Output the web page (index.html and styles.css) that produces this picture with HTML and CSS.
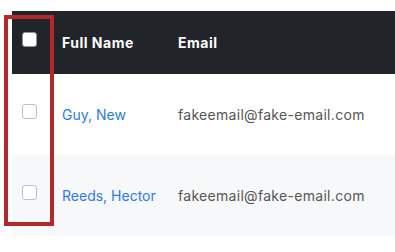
FILE: index.html
```html
<!doctype html>
<html lang="en">
    <head>
        <meta charset="UTF-8" />
        <title>Users</title>
        <link rel="stylesheet" href="styles.css">
    </head>
    <body>
        <div class="table-wrap">
            <table>
                <thead>
                    <tr>
                        <th class="check-col"><input type="checkbox" class="check"></th>
                        <th class="name-col">Full Name</th>
                        <th>Email</th>
                    </tr>
                </thead>
                <tbody>
                    <tr>
                        <td class="check-col"><input type="checkbox" class="check"></td>
                        <td><a href="#">Guy, New</a></td>
                        <td class="email">fakeemail@fake-email.com</td>
                    </tr>
                    <tr class="striped">
                        <td class="check-col"><input type="checkbox" class="check"></td>
                        <td><a href="#">Reeds, Hector</a></td>
                        <td class="email">fakeemail@fake-email.com</td>
                    </tr>
                </tbody>
            </table>
            <div class="highlight"></div>
        </div>
    </body>
</html>
```

FILE: styles.css
```css
body {
    margin: 0;
    padding: 0;
    background-color: #fff;
    font-family: Inter, "Noto Sans", sans-serif;
    font-size: 14px;
    color: #555;
    overflow: hidden;
}

.table-wrap {
    position: relative;
    padding: 11px 0 0 12px;
}

table {
    border-collapse: collapse;
    width: 420px;
}

th,
td {
    padding: 0 10px;
    text-align: left;
    white-space: nowrap;
}

th {
    height: 63px;
    background-color: #212529;
    color: #fff;
    font-weight: 700;
    letter-spacing: 0.5px;
}

td {
    height: 81px;
}

.striped td {
    background-color: #f7f8fa;
}

.check-col {
    width: 30px;
    padding-right: 0;
}

.name-col {
    width: 96px;
}

.email {
    letter-spacing: 0.3px;
}

a {
    color: #2f7ae5;
    text-decoration: none;
}

.check {
    appearance: none;
    display: block;
    width: 15px;
    height: 15px;
    margin: -6px 0 0 0;
    background-color: #fff;
    border: 1px solid #b5c3cc;
    border-radius: 3px;
}

th .check {
    border-color: #8a949c;
}

.highlight {
    position: absolute;
    left: 4px;
    top: 15px;
    width: 42px;
    height: 203px;
    border: 4px solid #b3292b;
}
```
